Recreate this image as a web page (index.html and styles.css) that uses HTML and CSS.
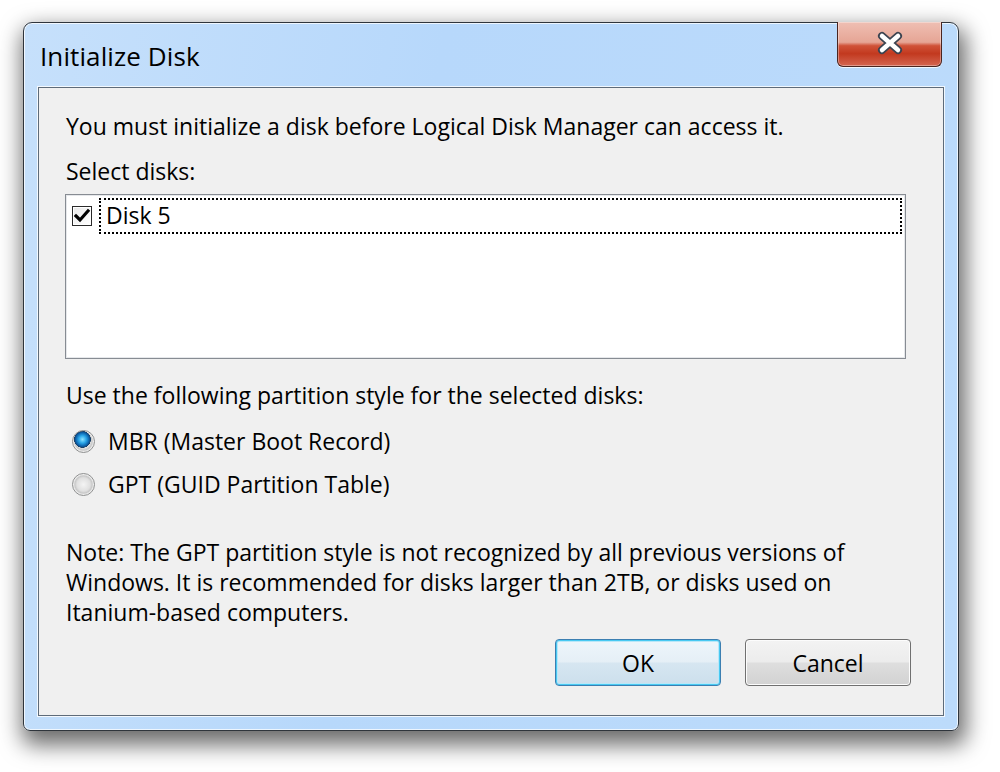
FILE: index.html
```html
<!DOCTYPE html>
<html>
<head>
<meta charset="utf-8">
<title>Initialize Disk</title>
<link rel="stylesheet" href="styles.css">
</head>
<body>
<div class="desktop">
<div class="window">
  <div class="titlebar">
    <span class="title">Initialize Disk</span>
    <div class="close">
      <svg width="30" height="24" viewBox="0 0 30 24">
        <path d="M7 5 L23 19 M23 5 L7 19" stroke="#3b4350" stroke-width="8" stroke-linecap="round"/>
        <path d="M7 5 L23 19 M23 5 L7 19" stroke="#ffffff" stroke-width="4.5" stroke-linecap="round"/>
      </svg>
    </div>
  </div>
  <div class="panel">
    <p class="line">You must initialize a disk before Logical Disk Manager can access it.</p>
    <p class="line label">Select disks:</p>
    <div class="listbox">
      <div class="item">
        <span class="check">
          <svg width="18" height="18" viewBox="0 0 18 18">
            <path d="M3 9 L7 13 L15 4" fill="none" stroke="#000" stroke-width="3.2" stroke-linecap="square"/>
          </svg>
        </span>
        <span class="focus">Disk 5</span>
      </div>
    </div>
    <p class="line style-label">Use the following partition style for the selected disks:</p>
    <div class="radios">
      <div class="radio-row"><span class="radio on"></span><span>MBR (Master Boot Record)</span></div>
      <div class="radio-row"><span class="radio"></span><span>GPT (GUID Partition Table)</span></div>
    </div>
    <p class="note">Note: The GPT partition style is not recognized by all previous versions of<br>Windows. It is recommended for disks larger than 2TB, or disks used on<br>Itanium-based computers.</p>
    <div class="buttons">
      <div class="btn default">OK</div>
      <div class="btn">Cancel</div>
    </div>
  </div>
</div>
</div>
</body>
</html>
```

FILE: styles.css
```css
html, body {
  margin: 0;
  padding: 0;
  background: #ffffff;
}

body {
  font-family: "Open Sans", "Noto Sans", sans-serif;
  font-size: 23px;
  color: #000;
}

.desktop {
  height: 772px;
  box-sizing: border-box;
  padding: 22px 0 0 23px;
  overflow: hidden;
}

.window {
  position: relative;
  box-sizing: border-box;
  width: 936px;
  height: 709px;
  border: 1px solid #2f353c;
  border-radius: 9px 9px 7px 7px;
  background: linear-gradient(100deg, #c6e0fb 0%, #b7d8fb 40%, #bcdbfb 100%);
  box-shadow: inset 0 0 0 1px rgba(255,255,255,0.75), 3px 10px 22px 4px rgba(0,0,0,0.58);
  padding: 0 14px 14px 14px;
  display: flex;
  flex-direction: column;
}

.titlebar {
  height: 64px;
  flex: none;
  display: flex;
  align-items: flex-start;
  padding: 18px 0 0 2px;
  box-sizing: border-box;
}

.title {
  line-height: 30px;
  font-size: 26px;
  letter-spacing: 0.1px;
  color: #000;
}

.close {
  position: absolute;
  left: 813px;
  top: -1px;
  width: 105px;
  height: 45px;
  box-sizing: border-box;
  border: 1px solid #4a2520;
  border-top: none;
  border-radius: 0 0 6px 6px;
  background: linear-gradient(180deg, #efbfb3 0%, #e6a595 46%, #d05238 54%, #c2391f 72%, #d46651 100%);
  box-shadow: inset 0 0 0 1px rgba(255,255,255,0.35), 0 1px 0 rgba(255,255,255,0.8);
  display: flex;
  align-items: center;
  justify-content: center;
}

.close svg {
  display: block;
  margin-top: -2px;
}

.panel {
  flex: 1;
  background: #f0f0f0;
  border: 1px solid #5e6b79;
  box-shadow: 0 0 0 1px rgba(255,255,255,0.8);
  padding: 23px 32px 0 27px;
  display: flex;
  flex-direction: column;
}

.line {
  margin: 0;
  line-height: 30px;
  white-space: nowrap;
}

.label {
  margin-top: 15px;
}

.listbox {
  margin: 8px 5px 0 -1px;
  height: 165px;
  box-sizing: border-box;
  background: #fff;
  border: 1px solid #878c93;
  box-shadow: inset 0 0 0 1px #e6e8eb;
  padding: 3px 3px 0 6px;
}

.item {
  display: flex;
  align-items: center;
}

.check {
  width: 20px;
  height: 20px;
  box-sizing: border-box;
  border: 1px solid #2a2a2a;
  background: linear-gradient(135deg, #e8e8e8, #ffffff);
  box-shadow: inset 0 0 0 1px #fff;
  display: flex;
  align-items: center;
  justify-content: center;
  flex: none;
}

.check svg {
  display: block;
}

.focus {
  flex: 1;
  margin-left: 7px;
  height: 36px;
  box-sizing: border-box;
  border: 2px dotted #000;
  padding-left: 5px;
  line-height: 31px;
}

.style-label {
  margin-top: 21px;
}

.radios {
  margin-top: 16px;
  display: flex;
  flex-direction: column;
  gap: 13px;
}

.radio-row {
  display: flex;
  align-items: center;
  height: 30px;
  gap: 13px;
  margin-left: 6px;
  white-space: nowrap;
}

.radio {
  width: 23px;
  height: 23px;
  box-sizing: border-box;
  border-radius: 50%;
  border: 1px solid #8e8f8f;
  background: radial-gradient(circle at 50% 50%, #f4f4f4 0%, #e0e0e0 45%, #c8c8c8 58%, #f7f7f7 70%, #d9d9d9 100%);
  flex: none;
}

.radio.on {
  background:
    radial-gradient(circle at 45% 40%, #8fe3ff 0%, #2aa6e8 22%, #0a5ea8 40%, #1c3f63 48%, rgba(0,0,0,0) 50%),
    radial-gradient(circle at 50% 50%, #f4f4f4 0%, #e0e0e0 45%, #c8c8c8 58%, #f7f7f7 70%, #d9d9d9 100%);
}

.note {
  margin: 38px 0 0 0;
  line-height: 30px;
  white-space: nowrap;
}

.buttons {
  margin-top: 12px;
  display: flex;
  justify-content: flex-end;
  gap: 24px;
}

.btn {
  width: 166px;
  height: 47px;
  box-sizing: border-box;
  border: 1px solid #707070;
  border-radius: 4px;
  background: linear-gradient(180deg, #f3f3f3 0%, #ececec 48%, #dedede 52%, #d2d2d2 100%);
  box-shadow: inset 0 0 0 1px #fcfcfc;
  display: flex;
  align-items: center;
  justify-content: center;
  line-height: 30px;
}

.btn.default {
  border-color: #3c7fb1;
  background: linear-gradient(180deg, #eef6fb 0%, #e5eff6 48%, #d6e6f1 52%, #ccdfec 100%);
  box-shadow: inset 0 0 0 1px #48c9f2, inset 0 0 0 2px #b9e7f8;
}
```
